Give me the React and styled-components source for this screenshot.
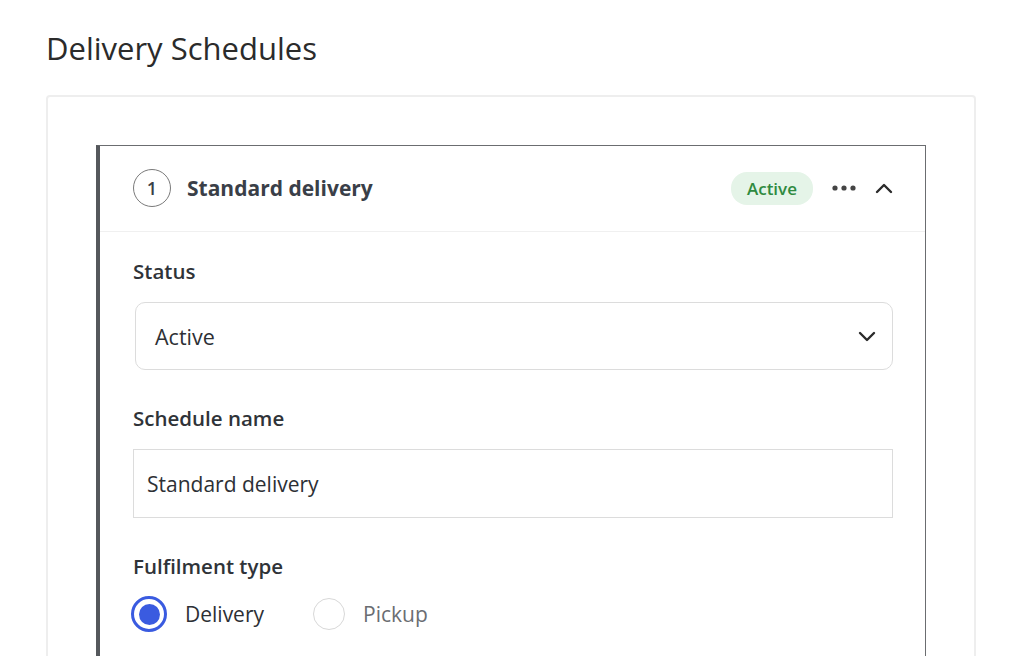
import styled, { createGlobalStyle } from "styled-components";

const GlobalStyle = createGlobalStyle`
  html, body {
    margin: 0;
    padding: 0;
    background: #ffffff;
  }
  body {
    font-family: "Open Sans", "Noto Sans", sans-serif;
    color: #2b2f36;
  }
`;

const Page = styled.div`
  padding: 28px 48px 0 46px;
  height: 656px;
  box-sizing: border-box;
  overflow: hidden;
`;

const Title = styled.h1`
  margin: 0 0 27px;
  font-size: 31px;
  font-weight: 500;
  color: #2b2b2b;
  line-height: 40px;
`;

const OuterCard = styled.div`
  border: 2px solid #eeeeee;
  border-radius: 4px;
  padding: 48px 48px 48px;
`;

const Schedule = styled.section`
  border: 1.5px solid #6b6d70;
  border-left: 4px solid #55585c;
  background: #fff;
`;

const Header = styled.div`
  display: flex;
  align-items: center;
  height: 84px;
  padding: 0 32px 1px 33px;
  border-bottom: 1.5px solid #f0f0f0;
`;

const StepNumber = styled.span`
  width: 36px;
  height: 36px;
  border: 1.5px solid #7a7a7a;
  border-radius: 50%;
  display: flex;
  align-items: center;
  justify-content: center;
  font-size: 18px;
  font-weight: 600;
  color: #3a3f48;
  margin-right: 16px;
`;

const ScheduleTitle = styled.h2`
  margin: 0;
  flex: 1;
  font-size: 21px;
  font-weight: 700;
  color: #3a3f48;
`;

const Badge = styled.span`
  background: #e5f4e8;
  color: #2f8a3f;
  font-size: 17px;
  font-weight: 600;
  border-radius: 16px;
  padding: 5px 16px 5px;
  margin-right: 18px;
`;

const IconButton = styled.button`
  border: none;
  background: none;
  padding: 0;
  display: flex;
  align-items: center;
  justify-content: center;
  color: #3d3d3d;
  margin-left: ${({ gap }) => gap || 0}px;
`;

const Body = styled.div`
  padding: 25px 32px 0 33px;
  display: flex;
  flex-direction: column;
`;

const Field = styled.div`
  display: flex;
  flex-direction: column;
  margin-bottom: 34px;
`;

const Label = styled.label`
  font-size: 20.5px;
  font-weight: 600;
  color: #2f3338;
  margin-bottom: 17px;
  line-height: 28px;
`;

const Select = styled.div`
  display: flex;
  align-items: center;
  justify-content: space-between;
  height: 66px;
  margin-left: 2px;
  padding: 0 16px 0 19px;
  border: 1.5px solid #dcdcdc;
  border-radius: 10px;
  font-size: 21.5px;
  color: #2d3035;
`;

const TextInput = styled.input`
  height: 69px;
  box-sizing: border-box;
  border: 1.5px solid #dcdcdc;
  border-radius: 0;
  padding: 0 13px;
  font-family: inherit;
  font-size: 21px;
  color: #2d3035;
  outline: none;
`;

const RadioGroup = styled.div`
  display: flex;
  align-items: center;
  margin-top: -1px;
`;

const RadioOption = styled.label`
  display: flex;
  align-items: center;
  gap: 18px;
  margin-right: ${({ last }) => (last ? 0 : 49)}px;
  font-size: 21px;
  color: ${({ checked }) => (checked ? "#2d3035" : "#6a6d72")};
`;

const RadioDot = styled.span`
  box-sizing: border-box;
  width: ${({ checked }) => (checked ? 36 : 32)}px;
  height: ${({ checked }) => (checked ? 36 : 32)}px;
  margin-left: ${({ checked }) => (checked ? -2 : 0)}px;
  border-radius: 50%;
  border: ${({ checked }) =>
    checked ? "3.5px solid #3a5be0" : "1.5px solid #d8d8d8"};
  display: flex;
  align-items: center;
  justify-content: center;

  &::after {
    content: "";
    display: ${({ checked }) => (checked ? "block" : "none")};
    width: 21px;
    height: 21px;
    border-radius: 50%;
    background: #3a5be0;
  }
`;

const Dots = () => (
  <svg width="26" height="8" viewBox="0 0 26 8">
    <circle cx="4" cy="4" r="2.6" fill="#444" />
    <circle cx="13" cy="4" r="2.6" fill="#444" />
    <circle cx="22" cy="4" r="2.6" fill="#444" />
  </svg>
);

const Chevron = ({ up }) => (
  <svg width="18" height="12" viewBox="0 0 18 12">
    <path
      d={up ? "M2 10 L9 3 L16 10" : "M2 3 L9 10 L16 3"}
      fill="none"
      stroke="#2b2b2b"
      strokeWidth="2.4"
      strokeLinecap="round"
      strokeLinejoin="round"
    />
  </svg>
);

const App = () => {
  return (
    <Page>
      <GlobalStyle />
      <Title>Delivery Schedules</Title>
      <OuterCard>
        <Schedule>
          <Header>
            <StepNumber>1</StepNumber>
            <ScheduleTitle>Standard delivery</ScheduleTitle>
            <Badge>Active</Badge>
            <IconButton aria-label="More options">
              <Dots />
            </IconButton>
            <IconButton aria-label="Collapse" gap={18}>
              <Chevron up />
            </IconButton>
          </Header>
          <Body>
            <Field>
              <Label>Status</Label>
              <Select>
                Active
                <Chevron />
              </Select>
            </Field>
            <Field>
              <Label>Schedule name</Label>
              <TextInput defaultValue="Standard delivery" />
            </Field>
            <Field>
              <Label>Fulfilment type</Label>
              <RadioGroup>
                <RadioOption checked>
                  <RadioDot checked />
                  Delivery
                </RadioOption>
                <RadioOption last>
                  <RadioDot />
                  Pickup
                </RadioOption>
              </RadioGroup>
            </Field>
          </Body>
        </Schedule>
      </OuterCard>
    </Page>
  );
};

export default App;
